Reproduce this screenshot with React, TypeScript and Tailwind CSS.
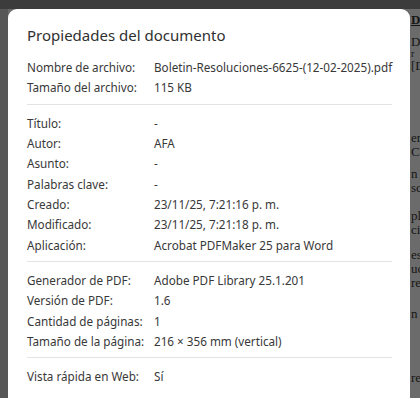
import React from "react";

const sections: [string, string][][] = [
  [
    ["Nombre de archivo:", "Boletin-Resoluciones-6625-(12-02-2025).pdf"],
    ["Tamaño del archivo:", "115 KB"],
  ],
  [
    ["Título:", "-"],
    ["Autor:", "AFA"],
    ["Asunto:", "-"],
    ["Palabras clave:", "-"],
    ["Creado:", "23/11/25, 7:21:16 p. m."],
    ["Modificado:", "23/11/25, 7:21:18 p. m."],
    ["Aplicación:", "Acrobat PDFMaker 25 para Word"],
  ],
  [
    ["Generador de PDF:", "Adobe PDF Library 25.1.201"],
    ["Versión de PDF:", "1.6"],
    ["Cantidad de páginas:", "1"],
    ["Tamaño de la página:", "216 × 356 mm (vertical)"],
  ],
  [["Vista rápida en Web:", "Sí"]],
];

const pageLines: [string, string][] = [
  ["DI", "mt-[4px] font-bold underline"],
  ["Di", "mt-[8px]"],
  ["r", "mt-[0px] text-[10px] leading-[10px]"],
  ["[D", "mt-[0px]"],
  ["er", "mt-[58px]"],
  ["C", "mt-[0px]"],
  ["n", "mt-[8px]"],
  ["sc", "mt-[0px]"],
  ["pl", "mt-[14px]"],
  ["cia", "mt-[0px]"],
  ["es", "mt-[11px]"],
  ["uc", "mt-[0px]"],
  ["re", "mt-[0px]"],
  ["n c", "mt-[17px]"],
  ["re", "mt-[50px]"],
];

export default function App() {
  return (
    <div className="relative w-[420px] h-[398px] overflow-hidden bg-[#3c3c3c]">
      <div className="h-[9px] bg-[#3c3c3c]" />
      <div className="flex h-[389px]">
        <div className="w-[8px] bg-[#575757]" />
        <div className="flex-1 bg-[#6b6b6b] flex justify-end">
          <div
            className="w-[9px] overflow-hidden whitespace-nowrap text-[#151515] text-[13px] leading-[14px]"
            style={{ fontFamily: '"Liberation Serif", serif' }}
          >
            {pageLines.map(([t, c], i) => (
              <div key={i} className={c}>
                {t}
              </div>
            ))}
          </div>
        </div>
      </div>

      <div
        className="absolute left-[8px] top-[9px] w-[402px] h-[400px] bg-white rounded-t-[9px] pl-[19px] pr-[18px] text-[#383838]"
        style={{ fontFamily: '"Noto Sans", "Open Sans", sans-serif' }}
      >
        <div className="pt-[16px] text-[15px] leading-[20px] text-[#303030]">
          Propiedades del documento
        </div>
        <div className="mt-[12px]">
          {sections.map((rows, si) => (
            <div key={si}>
              {si > 0 && <div className="mt-[6px] mb-[8px] h-px bg-[#e3e3e3]" />}
              {rows.map(([k, v]) => (
                <div key={k} className="flex text-[11.7px] leading-[20.33px] whitespace-nowrap">
                  <div className="w-[127px] shrink-0">{k}</div>
                  <div>{v}</div>
                </div>
              ))}
            </div>
          ))}
        </div>
      </div>
    </div>
  );
}
